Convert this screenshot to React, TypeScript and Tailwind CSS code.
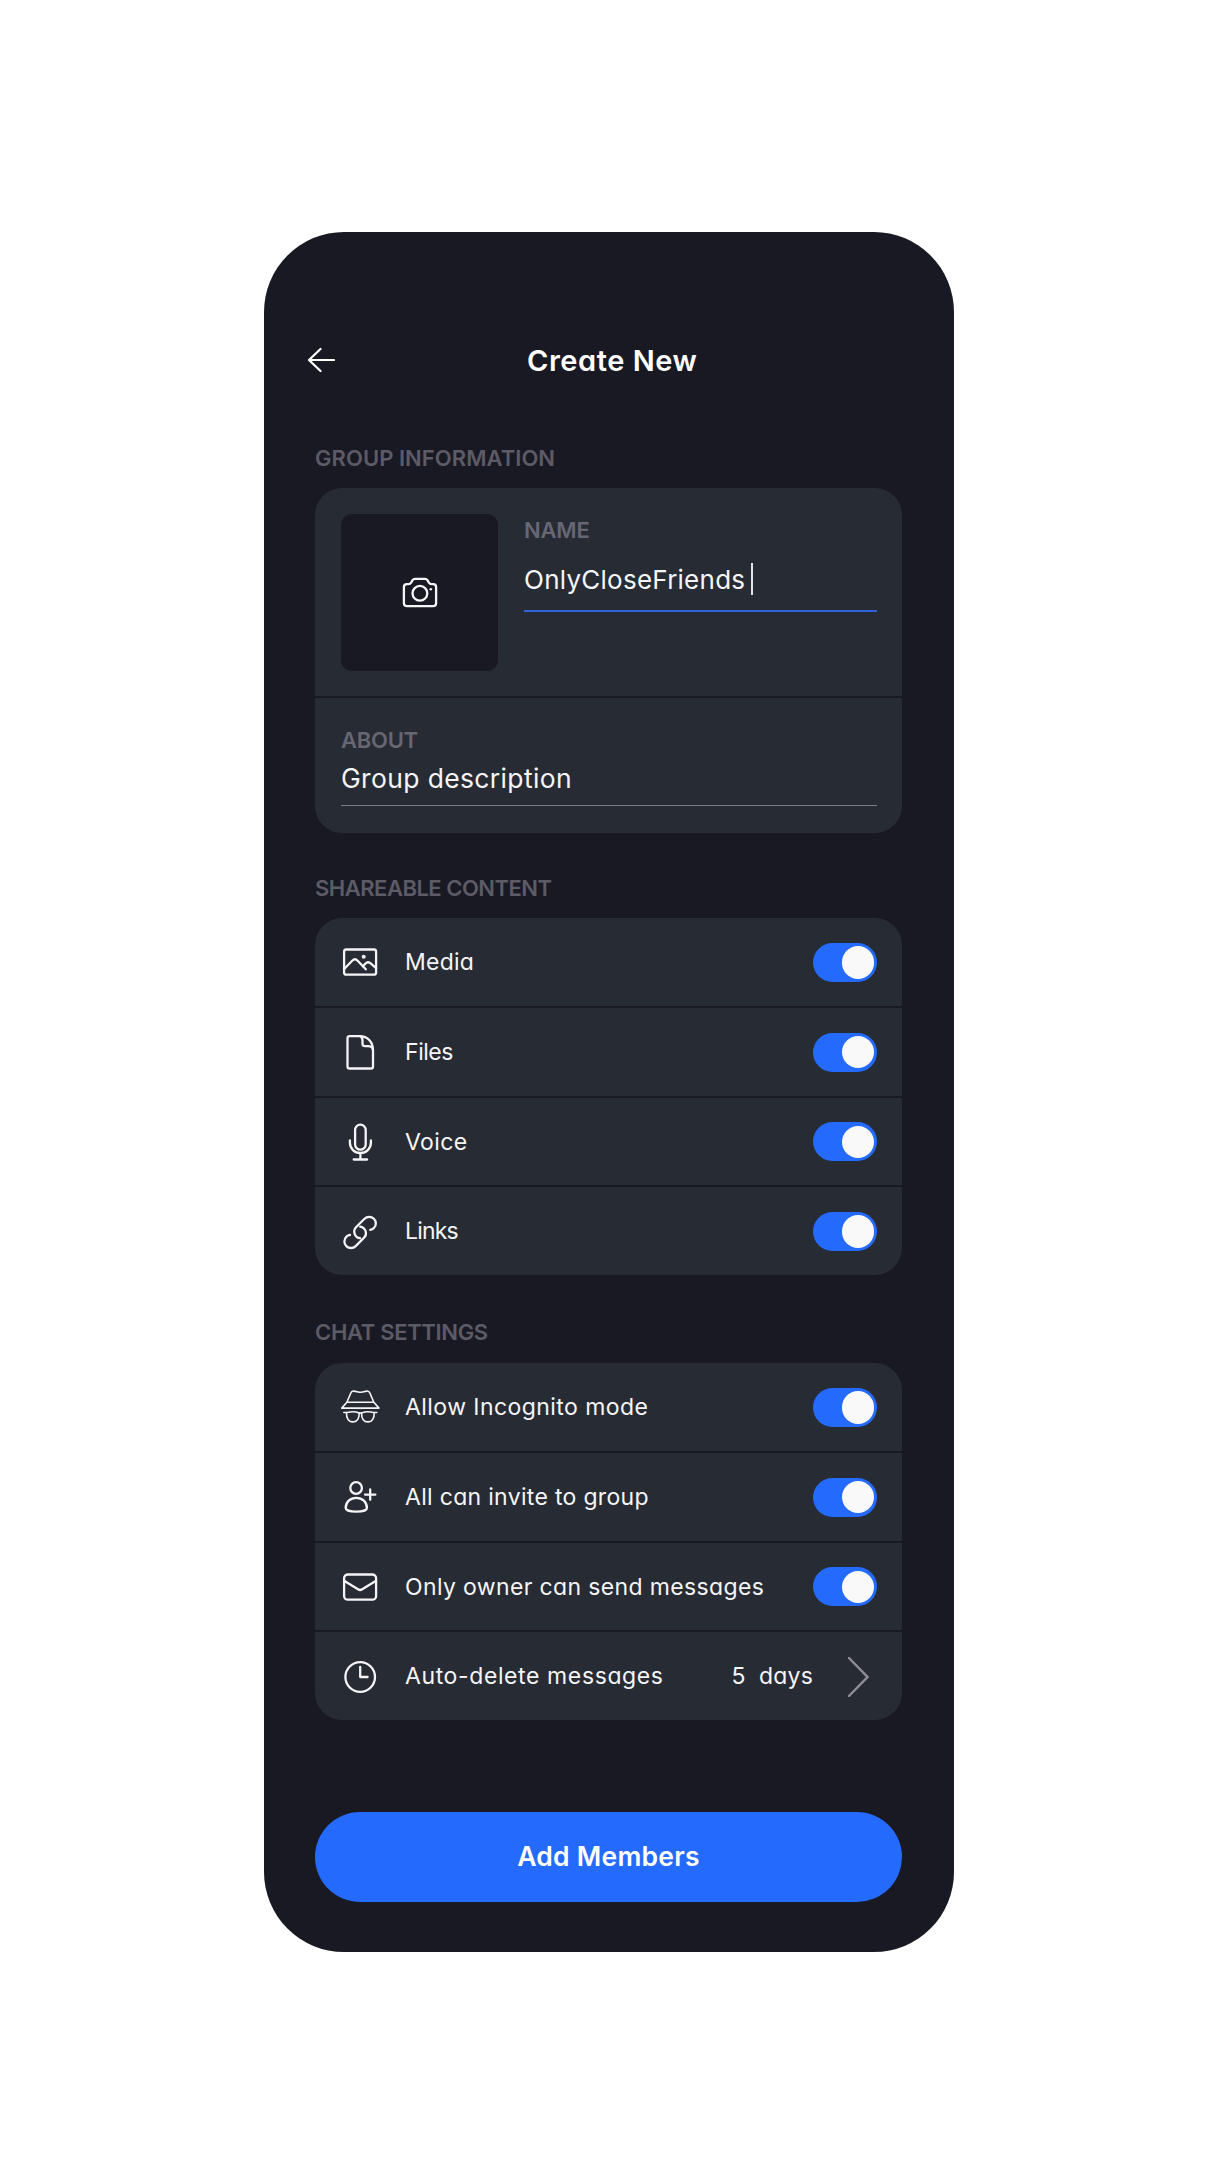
import React from "react";

type IconProps = { children: React.ReactNode; width?: number };

function Icon({ children, width = 2.3 }: IconProps) {
  return (
    <svg
      viewBox="0 0 38 38"
      className="size-[38px] shrink-0 overflow-visible"
      fill="none"
      stroke="currentColor"
      strokeWidth={width}
      strokeLinecap="round"
      strokeLinejoin="round"
    >
      {children}
    </svg>
  );
}

const CameraIcon = () => (
  <Icon>
    <path d="M5.8 11.2h1.7c1.2 0 2-.5 2.6-1.5l1.5-2.500c.6-1 1.400-1.400 2.500-1.400h9.800c1.100 0 1.900.4 2.500 1.400l1.500 2.500c.6 1 1.400 1.500 2.600 1.500h1.700c1.800 0 2.900 1.200 2.900 3v16c0 1.800-1.100 2.900-2.900 2.900H5.800c-1.800 0-2.900-1.100-2.900-2.900v-16c0-1.800 1.100-3 2.900-3Z" />
    <circle cx="18.900" cy="20.300" r="7.400" />
    <circle cx="29.800" cy="16.200" r="1.300" fill="currentColor" stroke="none" />
  </Icon>
);

const MediaIcon = () => (
  <Icon>
    <rect x="3.100" y="6.500" width="32" height="25.200" rx="2.200" />
    <path d="m3.400 25.800 8-8.300c1.800-1.700 3.300-1.700 5 0l8.400 8.800" />
    <path d="m21.900 23.200 2.600-2.700c1.500-1.500 3.100-1.600 4.800-.3l5.600 4.600" />
    <circle cx="22.700" cy="13.700" r="2" fill="currentColor" stroke="none" />
  </Icon>
);

const FileIcon = () => (
  <Icon>
    <path d="M8.600 3.100h9.900C27 3.100 32 9.400 32 17v16.400c0 1.300-.8 2.100-2.100 2.100H8.600c-1.300 0-2.100-.8-2.100-2.100V5.200c0-1.300.8-2.100 2.100-2.100Z" />
    <path d="M19.300 3.200c1.600.8 2.200 2.300 2.200 4.200v3.400c0 1.700.8 2.400 2.500 2.400h3c2.400 0 4.300.9 4.900 3.300" />
  </Icon>
);

const MicIcon = () => (
  <Icon>
    <rect x="14.100" y="1.700" width="10.600" height="25" rx="5.300" />
    <path d="M8.900 17.500v2.300c0 5.800 4.600 10.200 10.500 10.200s10.500-4.400 10.500-10.200v-2.300M19.400 30v6.400M12.700 36.500h13.400" />
  </Icon>
);

const chainLoop = "M29.2 16.900c1.350-.2 2.670-.8 3.670-1.830a6.600 6.600 0 0 0-9.340-9.340l-8.300 8.300a6.600 6.600 0 0 0 3.770 11.200";

const LinkIcon = () => (
  <Icon>
    <path d={chainLoop} />
    <path transform="rotate(180 19.1 19.4)" d={chainLoop} />
  </Icon>
);

const IncognitoIcon = () => (
  <Icon width={1.6}>
    <path d="M5.900 14.300 9.700 5.200c.7-1.700 1.700-2.400 3.300-2.100l4.300.9c1.400.3 2.700.3 4.100 0l4.300-.9c1.600-.3 2.600.4 3.300 2.100l3.800 9.100M5.900 14.300h26.900M5.900 14.300.7 20.100h37.300l-5.200-5.800" />
    <path d="M2.800 24.500h3.300c4-.9 8.400-.9 11.300.2 1.300.5 2.600.5 3.900 0 2.900-1.100 7.300-1.100 11.300-.2h3.200" />
    <path d="M5.500 24.700c-.2 5.400 2 9.200 6.300 9.200 4 0 6.400-3.200 6.400-9M33.200 24.700c.2 5.400-2 9.200-6.300 9.200-4 0-6.400-3.200-6.400-9" />
  </Icon>
);

const InviteIcon = () => (
  <Icon>
    <circle cx="15.100" cy="10" r="5.800" />
    <path d="M4.700 30c0-6 4.500-10.200 10.600-10.200S25.900 24 25.900 30c0 2.300-4.500 3.700-10.600 3.700S4.700 32.300 4.700 30ZM24 16.600h10.400M29.200 11.400v10.400" />
  </Icon>
);

const MailIcon = () => (
  <Icon>
    <rect x="3.100" y="6.500" width="32" height="25.200" rx="3.800" />
    <path d="m3.500 13.100 13.500 8.200c1.400.9 2.800.9 4.200 0l13.500-8.200" />
  </Icon>
);

const ClockIcon = () => (
  <Icon>
    <circle cx="19.200" cy="19" r="14.800" />
    <path d="M19.200 9v10h7.400" />
  </Icon>
);

function Toggle() {
  return (
    <span
      role="switch"
      aria-checked="true"
      className="flex h-[39px] w-16 shrink-0 items-center justify-end rounded-full bg-[#246bfd] pr-[3px]"
    >
      <span className="size-[32.5px] rounded-full bg-[#f9f9f9]" />
    </span>
  );
}

function SectionLabel({ children, className }: { children: React.ReactNode; className: string }) {
  return (
    <h2 className={`text-[22px] leading-8 font-semibold whitespace-nowrap text-[#5c5b66] ${className}`}>{children}</h2>
  );
}

type RowData = { label: string; tracking: string; icon: () => React.ReactElement; value?: string };

function Row({ label, tracking, icon: RowIcon, value }: RowData) {
  return (
    <li className="flex h-[87.75px] items-center bg-[#272b34] pt-px pr-[25px] pl-[26px]">
      <RowIcon />
      <span className={`ml-[26px] flex-1 text-[23px] whitespace-nowrap ${tracking}`}>{label}</span>
      {value ? (
        <span className="flex items-center">
          <span className="text-[23px] tracking-[0.2px] whitespace-pre">{value}</span>
          <svg viewBox="0 0 21 40" className="mr-2 ml-[35px] h-10 w-[21px]" fill="none" stroke="#8e8e98" strokeWidth="2.400" strokeLinecap="round">
            <path d="m1 1 18.500 19L1 39" />
          </svg>
        </span>
      ) : (
        <Toggle />
      )}
    </li>
  );
}

const shareable: RowData[] = [
  { label: "Media", tracking: "tracking-[0.25px]", icon: MediaIcon },
  { label: "Files", tracking: "tracking-[-0.45px]", icon: FileIcon },
  { label: "Voice", tracking: "tracking-[0.4px]", icon: MicIcon },
  { label: "Links", tracking: "tracking-[-0.8px]", icon: LinkIcon },
];

const settings: RowData[] = [
  { label: "Allow Incognito mode", tracking: "tracking-[0.44px]", icon: IncognitoIcon },
  { label: "All can invite to group", tracking: "tracking-[0.31px]", icon: InviteIcon },
  { label: "Only owner can send messages", tracking: "tracking-[0.36px]", icon: MailIcon },
  { label: "Auto-delete messages", tracking: "tracking-[0.61px]", icon: ClockIcon, value: "5  days" },
];

export default function App() {
  return (
    <div className="flex h-[2184px] w-[1218px] flex-col items-center bg-white pt-[232px] font-['Inter',sans-serif] text-[#f5f5f7] [font-feature-settings:'cv11']">
      <main className="flex h-[1720px] w-[690px] flex-col rounded-[80px] bg-[#191923] pr-[52px] pl-[51px]">
        <header className="mt-[106px] flex h-11 items-center text-white">
          <svg viewBox="0 0 28 26" className="-ml-2 h-[26px] w-7" fill="none" stroke="currentColor" strokeWidth="2.200" strokeLinecap="round" strokeLinejoin="round">
            <path d="M13.500 2 2 13l11.500 11M2 13h25" />
          </svg>
          <h1 className="mt-[2px] ml-[192px] text-[29px] font-semibold tracking-[0.55px] whitespace-nowrap">Create New</h1>
        </header>

        <SectionLabel className="mt-[60px] tracking-[0.05px]">GROUP INFORMATION</SectionLabel>
        <section className="mt-[14px] flex h-[345px] flex-col gap-[2px] overflow-hidden rounded-[27px]">
          <div className="flex h-[208px] bg-[#272b34] pt-[25.500px] pr-[25px] pl-[26px]">
            <div className="flex size-[157px] items-center justify-center rounded-[11px] bg-[#191923]">
              <CameraIcon />
            </div>
            <div className="ml-[26px] flex-1">
              <p className="text-[22px] leading-8 font-semibold tracking-[-0.2px] text-[#666773]">NAME</p>
              <div className="mt-[10px] flex h-[56px] items-start border-b-2 border-[#2f64d8] pt-[8px]">
                <span className="text-[26px] leading-8 tracking-[0.25px]">OnlyCloseFriends</span>
                <span className="-mt-px ml-[6px] h-8 w-[2px] bg-[#e4e4e8]" />
              </div>
            </div>
          </div>
          <div className="h-[135px] bg-[#272b34] pt-[26px] pr-[25px] pl-[26px]">
            <p className="text-[22px] leading-8 font-semibold tracking-[-0.25px] text-[#666773]">ABOUT</p>
            <p className="h-[50px] border-b border-[#7b7c87] pt-[6px] text-[26.5px] leading-8 tracking-[0.35px]">Group description</p>
          </div>
        </section>

        <SectionLabel className="mt-[39px] tracking-[-0.5px]">SHAREABLE CONTENT</SectionLabel>
        <ul className="mt-[14px] flex flex-col gap-[2px] overflow-hidden rounded-[27px]">
          {shareable.map((row) => (
            <Row key={row.label} {...row} />
          ))}
        </ul>

        <SectionLabel className="mt-[41px] tracking-[-0.32px]">CHAT SETTINGS</SectionLabel>
        <ul className="mt-[15px] flex flex-col gap-[2px] overflow-hidden rounded-[27px]">
          {settings.map((row) => (
            <Row key={row.label} {...row} />
          ))}
        </ul>

        <button className="mt-[92px] h-[90px] rounded-full bg-[#246bfd] text-[26.5px] font-semibold tracking-[0.25px] text-white">
          Add Members
        </button>
      </main>
    </div>
  );
}
